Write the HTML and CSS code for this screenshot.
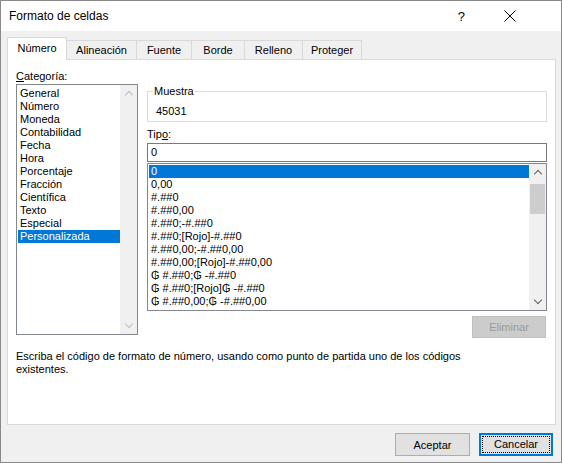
FILE: index.html
```html
<!DOCTYPE html>
<html>
<head>
  <title>Formato de celdas</title>
  <link rel="stylesheet" href="styles.css">
</head>
<body>
  <div class="dialog">
    <div class="titlebar">
      <span class="title">Formato de celdas</span>
      <span class="help">?</span>
      <span class="close">
        <svg width="12" height="12" viewBox="0 0 12 12"><path d="M0.5 0.5L11.5 11.5M11.5 0.5L0.5 11.5" stroke="#000" stroke-width="1"/></svg>
      </span>
    </div>

    <div class="content">
      <div class="tabs">
        <div class="tab active">Número</div>
        <div class="tab">Alineación</div>
        <div class="tab">Fuente</div>
        <div class="tab">Borde</div>
        <div class="tab">Relleno</div>
        <div class="tab">Proteger</div>
      </div>

      <div class="panel">
        <div class="columns">
          <div class="left">
            <div class="label"><u>C</u>ategoría:</div>
            <div class="category-list">
              <ul class="items">
                <li>General</li>
                <li>Número</li>
                <li>Moneda</li>
                <li>Contabilidad</li>
                <li>Fecha</li>
                <li>Hora</li>
                <li>Porcentaje</li>
                <li>Fracción</li>
                <li>Científica</li>
                <li>Texto</li>
                <li>Especial</li>
                <li class="selected">Personalizada</li>
              </ul>
              <div class="scrollbar disabled">
                <span class="arrow up"></span>
                <span class="track"></span>
                <span class="arrow down"></span>
              </div>
            </div>
          </div>

          <div class="right">
            <fieldset class="sample">
              <legend>Muestra</legend>
              <div class="sample-value">45031</div>
            </fieldset>

            <div class="label type-label">Tip<u>o</u>:</div>
            <div class="type-input">0</div>
            <div class="type-list">
              <ul class="items">
                <li class="selected">0</li>
                <li>0,00</li>
                <li>#.##0</li>
                <li>#.##0,00</li>
                <li>#.##0;-#.##0</li>
                <li>#.##0;[Rojo]-#.##0</li>
                <li>#.##0,00;-#.##0,00</li>
                <li>#.##0,00;[Rojo]-#.##0,00</li>
                <li>₲ #.##0;₲ -#.##0</li>
                <li>₲ #.##0;[Rojo]₲ -#.##0</li>
                <li>₲ #.##0,00;₲ -#.##0,00</li>
              </ul>
              <div class="scrollbar">
                <span class="arrow up"></span>
                <span class="track"><span class="thumb"></span></span>
                <span class="arrow down"></span>
              </div>
            </div>
            <div class="actions">
              <button class="btn disabled">Eliminar</button>
            </div>
          </div>
        </div>

        <p class="hint">Escriba el código de formato de número, usando como punto de partida uno de los códigos existentes.</p>
      </div>

      <div class="footer">
        <button class="btn">Aceptar</button>
        <button class="btn default"><span class="focus">Cancelar</span></button>
      </div>
    </div>
  </div>
</body>
</html>
```

FILE: styles.css
```css
* {
  box-sizing: border-box;
}

body {
  margin: 0;
  font-family: "Liberation Sans", Arial, sans-serif;
  font-size: 11px;
  color: #000;
}

.dialog {
  width: 562px;
  height: 463px;
  border: 1px solid #8a8a8a;
  display: flex;
  flex-direction: column;
  background: #f0f0f0;
}

.titlebar {
  height: 30px;
  background: #fff;
  display: flex;
  align-items: center;
  padding-left: 8px;
}

.title {
  flex: 1;
  font-size: 12px;
}

.help {
  font-size: 13px;
  margin-right: 39px;
}

.close {
  width: 12px;
  height: 12px;
  display: flex;
  margin-right: 45px;
}

.content {
  flex: 1;
  display: flex;
  flex-direction: column;
  padding: 6px 5px 0 6px;
}

/* tabs */
.tabs {
  display: flex;
  align-items: flex-end;
  height: 22px;
  position: relative;
  z-index: 1;
}

.tab {
  height: 19px;
  line-height: 18px;
  text-align: center;
  border: 1px solid #d9d9d9;
  border-bottom: none;
  border-left: none;
  background: #f0f0f0;
}

.tab:nth-child(2) { width: 70px; }
.tab:nth-child(3) { width: 55px; }
.tab:nth-child(4) { width: 53px; }
.tab:nth-child(5) { width: 58px; }
.tab:nth-child(6) { width: 59px; }

.tab.active {
  width: 60px;
  height: 23px;
  margin-bottom: -1px;
  background: #fff;
  border-left: 1px solid #d9d9d9;
  line-height: 21px;
}

.panel {
  height: 366px;
  background: #fff;
  border: 1px solid #d9d9d9;
  padding: 8px 8px 0 8px;
}

.columns {
  display: flex;
  gap: 9px;
}

.label {
  height: 16px;
  line-height: 16px;
}

.items {
  list-style: none;
  margin: 0;
  padding: 0;
  flex: 1;
}

.items li {
  height: 13px;
  line-height: 13px;
  padding-left: 2px;
  white-space: nowrap;
}

.items li.selected {
  background: #0078d7;
  color: #fff;
}

/* category list */
.category-list {
  width: 122px;
  height: 251px;
  border: 1px solid #828790;
  display: flex;
  padding: 1px 0 0 1px;
}

.category-list .items {
  padding-top: 1px;
}

.scrollbar {
  width: 17px;
  background: #f0f0f0;
  display: flex;
  flex-direction: column;
  margin-top: -1px;
}

.arrow {
  height: 17px;
  display: block;
  position: relative;
}

.arrow::before {
  content: "";
  position: absolute;
  left: 6px;
  width: 5px;
  height: 5px;
  border-left: 1.5px solid #606060;
  border-top: 1.5px solid #606060;
}

.arrow.up::before {
  top: 7px;
  transform: rotate(45deg);
}

.arrow.down::before {
  top: 4px;
  transform: rotate(225deg);
}

.scrollbar.disabled .arrow::before {
  border-color: #bfbfbf;
}

.track {
  flex: 1;
  display: block;
  padding: 0 1px;
}

.thumb {
  display: block;
  height: 30px;
  margin-top: 3px;
  background: #cdcdcd;
}

/* right column */
.right {
  width: 400px;
}

.sample {
  margin: 17px 0 0 0;
  height: 37px;
  border: 1px solid #dcdcdc;
  padding: 0 8px;
}

.sample legend {
  padding: 0 1px;
  margin-left: -3px;
  line-height: 12px;
}

.sample-value {
  padding-top: 8px;
  line-height: 13px;
}

.type-label {
  margin-top: 4px;
}

.type-input {
  height: 19px;
  border: 1px solid #7a7a7a;
  padding-left: 3px;
  line-height: 17px;
  margin-top: 1px;
}

.type-list {
  height: 148px;
  margin-top: 1px;
  border: 1px solid #828790;
  display: flex;
  padding: 1px 0 0 1px;
}

.actions {
  display: flex;
  justify-content: flex-end;
  margin-top: 5px;
  padding-right: 1px;
}

.btn {
  font-family: inherit;
  font-size: 11px;
  background: #e1e1e1;
  border: 1px solid #adadad;
  height: 23px;
  width: 75px;
  padding: 0;
  color: #000;
}

.btn.disabled {
  width: 74px;
  height: 22px;
  background: #cccccc;
  border-color: #bfbfbf;
  color: #9a9a9a;
}

.hint {
  margin: 12px 0 0 0;
  line-height: 13px;
  width: 490px;
}

.footer {
  display: flex;
  justify-content: flex-end;
  gap: 9px;
  padding: 8px 3px 0 0;
}

.btn.default {
  border: 2px solid #0078d7;
  width: 74px;
  padding: 1px;
}

.focus {
  display: block;
  height: 100%;
  border: 1px dotted #000;
  line-height: 15px;
}
```
